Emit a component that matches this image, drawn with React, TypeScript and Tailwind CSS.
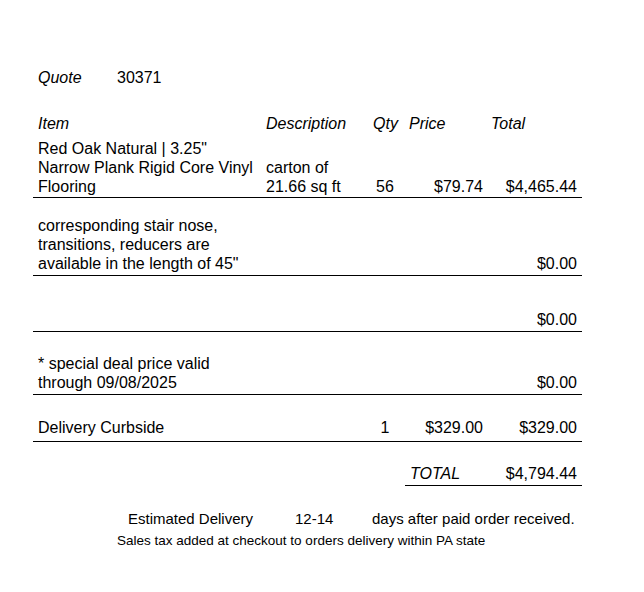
import React from "react";

const cols = "grid grid-cols-[229px_103px_40px_82px_95px]";

export default function App() {
  return (
    <div
      className="w-[644px] h-[592px] bg-white text-black text-[16px] leading-[19px] pt-[68px]"
      style={{ fontFamily: '"Liberation Sans", Arial, sans-serif' }}
    >
      <div className="flex h-[19px] whitespace-nowrap">
        <div className="ml-[38px] w-[79px] italic">Quote</div>
        <div>30371</div>
      </div>

      <div className="ml-[33px] w-[549px] mt-[27px] whitespace-nowrap">
        {/* header */}
        <div className={`${cols} h-[19px] italic`}>
          <div className="pl-[5px]">Item</div>
          <div className="pl-[4px]">Description</div>
          <div className="pl-[8px]">Qty</div>
          <div className="pl-[4px]">Price</div>
          <div className="pl-[4px]">Total</div>
        </div>

        {/* row 1 */}
        <div className={`${cols} h-[65px] items-end pb-[1px] border-b border-black`}>
          <div className="pl-[5px]">
            <div>Red Oak Natural | 3.25"</div>
            <div>Narrow Plank Rigid Core Vinyl</div>
            <div>Flooring</div>
          </div>
          <div className="pl-[4px]">
            <div>carton of</div>
            <div>21.66 sq ft</div>
          </div>
          <div className="text-center">56</div>
          <div className="text-right pr-[4px]">$79.74</div>
          <div className="text-right pr-[5px]">$4,465.44</div>
        </div>

        {/* row 2 */}
        <div className={`${cols} h-[78px] items-end pb-[2px] border-b border-black`}>
          <div className="pl-[5px]">
            <div>corresponding stair nose,</div>
            <div>transitions, reducers are</div>
            <div>available in the length of 45"</div>
          </div>
          <div></div>
          <div></div>
          <div></div>
          <div className="text-right pr-[5px]">$0.00</div>
        </div>

        {/* row 3 */}
        <div className={`${cols} h-[56px] items-end pb-[2px] border-b border-black`}>
          <div></div>
          <div></div>
          <div></div>
          <div></div>
          <div className="text-right pr-[5px]">$0.00</div>
        </div>

        {/* row 4 */}
        <div className={`${cols} h-[63px] items-end pb-[2px] border-b border-black`}>
          <div className="pl-[5px]">
            <div>* special deal price valid</div>
            <div>through 09/08/2025</div>
          </div>
          <div></div>
          <div></div>
          <div></div>
          <div className="text-right pr-[5px]">$0.00</div>
        </div>

        {/* row 5 */}
        <div className={`${cols} h-[47px] items-end pb-[4px] border-b border-black`}>
          <div className="pl-[5px]">Delivery Curbside</div>
          <div></div>
          <div className="text-center">1</div>
          <div className="text-right pr-[4px]">$329.00</div>
          <div className="text-right pr-[5px]">$329.00</div>
        </div>

        {/* total row */}
        <div className={`${cols} h-[44px] items-end`}>
          <div></div>
          <div></div>
          <div></div>
          <div className="italic pl-[5px] pb-[2px] h-full flex items-end border-b border-black">TOTAL</div>
          <div className="text-right pr-[5px] pb-[2px] h-full flex items-end justify-end border-b border-black">$4,794.44</div>
        </div>
      </div>

      <div className="flex mt-[23px] text-[15px] leading-[19px] whitespace-nowrap">
        <div className="ml-[128px] w-[167px]">Estimated Delivery</div>
        <div className="w-[77px]">12-14</div>
        <div>days after paid order received.</div>
      </div>
      <div className="ml-[117px] mt-[3px] text-[13.5px] leading-[19px] whitespace-nowrap">
        Sales tax added at checkout to orders delivery within PA state
      </div>
    </div>
  );
}
